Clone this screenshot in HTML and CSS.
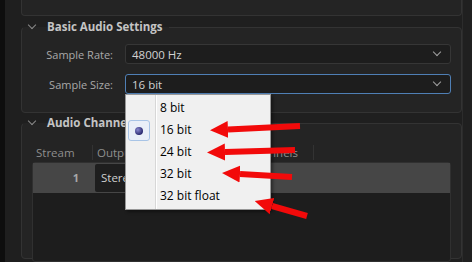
FILE: index.html
```html
<!DOCTYPE html>
<html lang="en">
<head>
    <meta charset="UTF-8">
    <meta name="viewport" content="width=device-width, initial-scale=1.0">
    <title>Export Settings - Audio</title>
    <link rel="stylesheet" href="styles.css">
</head>
<body>
    <div class="app">
        <div class="edge"></div>
        <div class="panel">
            <div class="group-end"></div>

            <fieldset class="group">
                <legend><span class="chev"></span>Basic Audio Settings</legend>
                <div class="field">
                    <label>Sample Rate:</label>
                    <div class="combo"><span>48000 Hz</span><span class="chev small"></span></div>
                </div>
                <div class="field">
                    <label>Sample Size:</label>
                    <div class="combo active"><span>16 bit</span><span class="chev small"></span></div>
                </div>
            </fieldset>

            <fieldset class="group channels">
                <legend><span class="chev"></span>Audio Channels</legend>
                <div class="table">
                    <div class="thead">
                        <div class="th col-stream">Stream</div>
                        <div class="th col-output">Output</div>
                        <div class="th col-source">Source Channels</div>
                    </div>
                    <div class="tbody">
                        <div class="row">
                            <div class="cell col-stream num">1</div>
                            <div class="cell col-output"><div class="cell-combo">Stereo</div></div>
                        </div>
                    </div>
                </div>
            </fieldset>
        </div>
        <div class="scroll"></div>
    </div>

    <!-- open Sample Size menu -->
    <ul class="menu">
        <li>8 bit</li>
        <li class="checked"><span class="mark"><span class="dot"></span></span>16 bit</li>
        <li>24 bit</li>
        <li>32 bit</li>
        <li>32 bit float</li>
    </ul>

    <svg class="arrows" width="472" height="262" viewBox="0 0 472 262">
        <defs>
            <marker id="head" markerUnits="userSpaceOnUse" viewBox="0 -9 18 18" refX="0" refY="0" markerWidth="18" markerHeight="18" orient="auto">
                <path d="M0,-8.5 L18,0 L0,8.5 Z" fill="#f20a0a"/>
            </marker>
        </defs>
        <line x1="300" y1="126" x2="228" y2="129.5" marker-end="url(#head)"/>
        <line x1="295" y1="150" x2="225" y2="152" marker-end="url(#head)"/>
        <line x1="292" y1="177" x2="240" y2="174" marker-end="url(#head)"/>
        <line x1="307" y1="216" x2="272" y2="206" marker-end="url(#head)"/>
    </svg>
</body>
</html>
```

FILE: styles.css
```css
body {
    margin: 0;
    background: #1f1f1f;
    font-family: "Open Sans", "Noto Sans", sans-serif;
    font-size: 11px;
    overflow: hidden;
}

.app {
    display: flex;
    height: 262px;
}

.edge {
    width: 5px;
    background: #0e0e0e;
    flex: none;
}

.panel {
    width: 441px;
    padding-left: 16px;
    background: #1f1f1f;
    flex: none;
}

.scroll {
    flex: 1;
    border-left: 1px solid #2c2c2c;
    background: #202020;
}

/* bottom of the group above, mostly scrolled away */
.group-end {
    height: 15px;
    border: 1px solid #333;
    border-top: none;
    border-radius: 0 0 4px 4px;
    background: #242424;
}

.group {
    margin: 3px 0 0;
    padding: 9px 10px 18px 0;
    border: 1px solid #333;
    border-radius: 4px;
    background: #242424;
}

.group legend {
    padding: 0 6px 0 4px;
    margin-left: 1px;
    line-height: 16px;
    font-weight: bold;
    font-size: 11.5px;
    color: #c4c4c4;
    display: flex;
    align-items: center;
}

.chev {
    display: inline-block;
    width: 5px;
    height: 5px;
    border-right: 1px solid #8a8a8a;
    border-bottom: 1px solid #8a8a8a;
    transform: rotate(45deg);
    margin: -4px 12px 0 2px;
}

.chev.small {
    border-color: #a0a0a0;
    margin: -4px 4px 0 0;
}

.field {
    display: flex;
    align-items: center;
    height: 20px;
    margin-bottom: 10px;
}

.field:last-child {
    margin-bottom: 0;
}

.field label {
    width: 91px;
    text-align: right;
    color: #a9a9a9;
    font-size: 11px;
    margin-right: 12px;
}

.combo {
    flex: 1;
    height: 18px;
    display: flex;
    align-items: center;
    justify-content: space-between;
    padding: 0 6px;
    background: #1d1d1d;
    border: 1px solid #363636;
    border-radius: 3px;
    color: #d2d2d2;
    font-size: 11.5px;
}

.combo.active {
    border-color: #4f7fb5;
}

.channels {
    margin-top: 2px;
    padding: 11px 10px 0 0;
    height: 131px;
}

.table {
    margin-left: 10px;
}

.thead {
    display: flex;
    height: 20px;
    align-items: center;
}

.th {
    color: #8e8e8e;
    font-size: 11.5px;
    padding-left: 4px;
    border-right: 1px solid #333;
    line-height: 15px;
    white-space: nowrap;
}

.col-stream {
    width: 56px;
}

.col-output {
    width: 100px;
}

.col-source {
    width: 96px;
    text-align: right;
    padding-right: 15px;
}

.tbody {
    height: 98px;
    background: #1d1d1d;
    border: 1px solid #303030;
    border-radius: 3px;
}

.row {
    display: flex;
    height: 30px;
    background: #464646;
}

.cell.num {
    width: 46px;
    padding-right: 15px;
    line-height: 30px;
    text-align: right;
    font-weight: bold;
    color: #a8a8a8;
}

.cell.col-output {
    padding: 1px 0 1px 1px;
}

.cell-combo {
    height: 28px;
    line-height: 28px;
    padding-left: 6px;
    width: 140px;
    background: #1e1e1e;
    border-radius: 2px;
    color: #d0d0d0;
    font-size: 11.5px;
}

.menu {
    position: absolute;
    left: 125px;
    top: 94px;
    width: 144px;
    margin: 0;
    padding: 2px 0;
    list-style: none;
    background: #f0f0f0 linear-gradient(to right, transparent 29px, #d7d7d7 29px, #d7d7d7 30px, #fff 30px, #fff 31px, transparent 31px);
    border: 1px solid #979797;
    box-shadow: 2px 2px 3px rgba(0, 0, 0, 0.4);
    font-family: "Open Sans", "Noto Sans", sans-serif;
    font-size: 12px;
    color: #000;
}

.menu li {
    position: relative;
    height: 22px;
    line-height: 22px;
    padding-left: 34px;
}

.mark {
    position: absolute;
    left: 2px;
    top: 1px;
    width: 20px;
    height: 19px;
    border: 1px solid #a8c4e6;
    border-radius: 3px;
    background: #e9eff8;
    display: flex;
    align-items: center;
    justify-content: center;
}

.dot {
    width: 8px;
    height: 8px;
    border-radius: 50%;
    background: radial-gradient(circle at 35% 35%, #8a8ad0, #2a2a70 70%);
}

.arrows {
    position: absolute;
    left: 0;
    top: 0;
    pointer-events: none;
}

.arrows line {
    stroke: #f20a0a;
    stroke-width: 6;
}
```
